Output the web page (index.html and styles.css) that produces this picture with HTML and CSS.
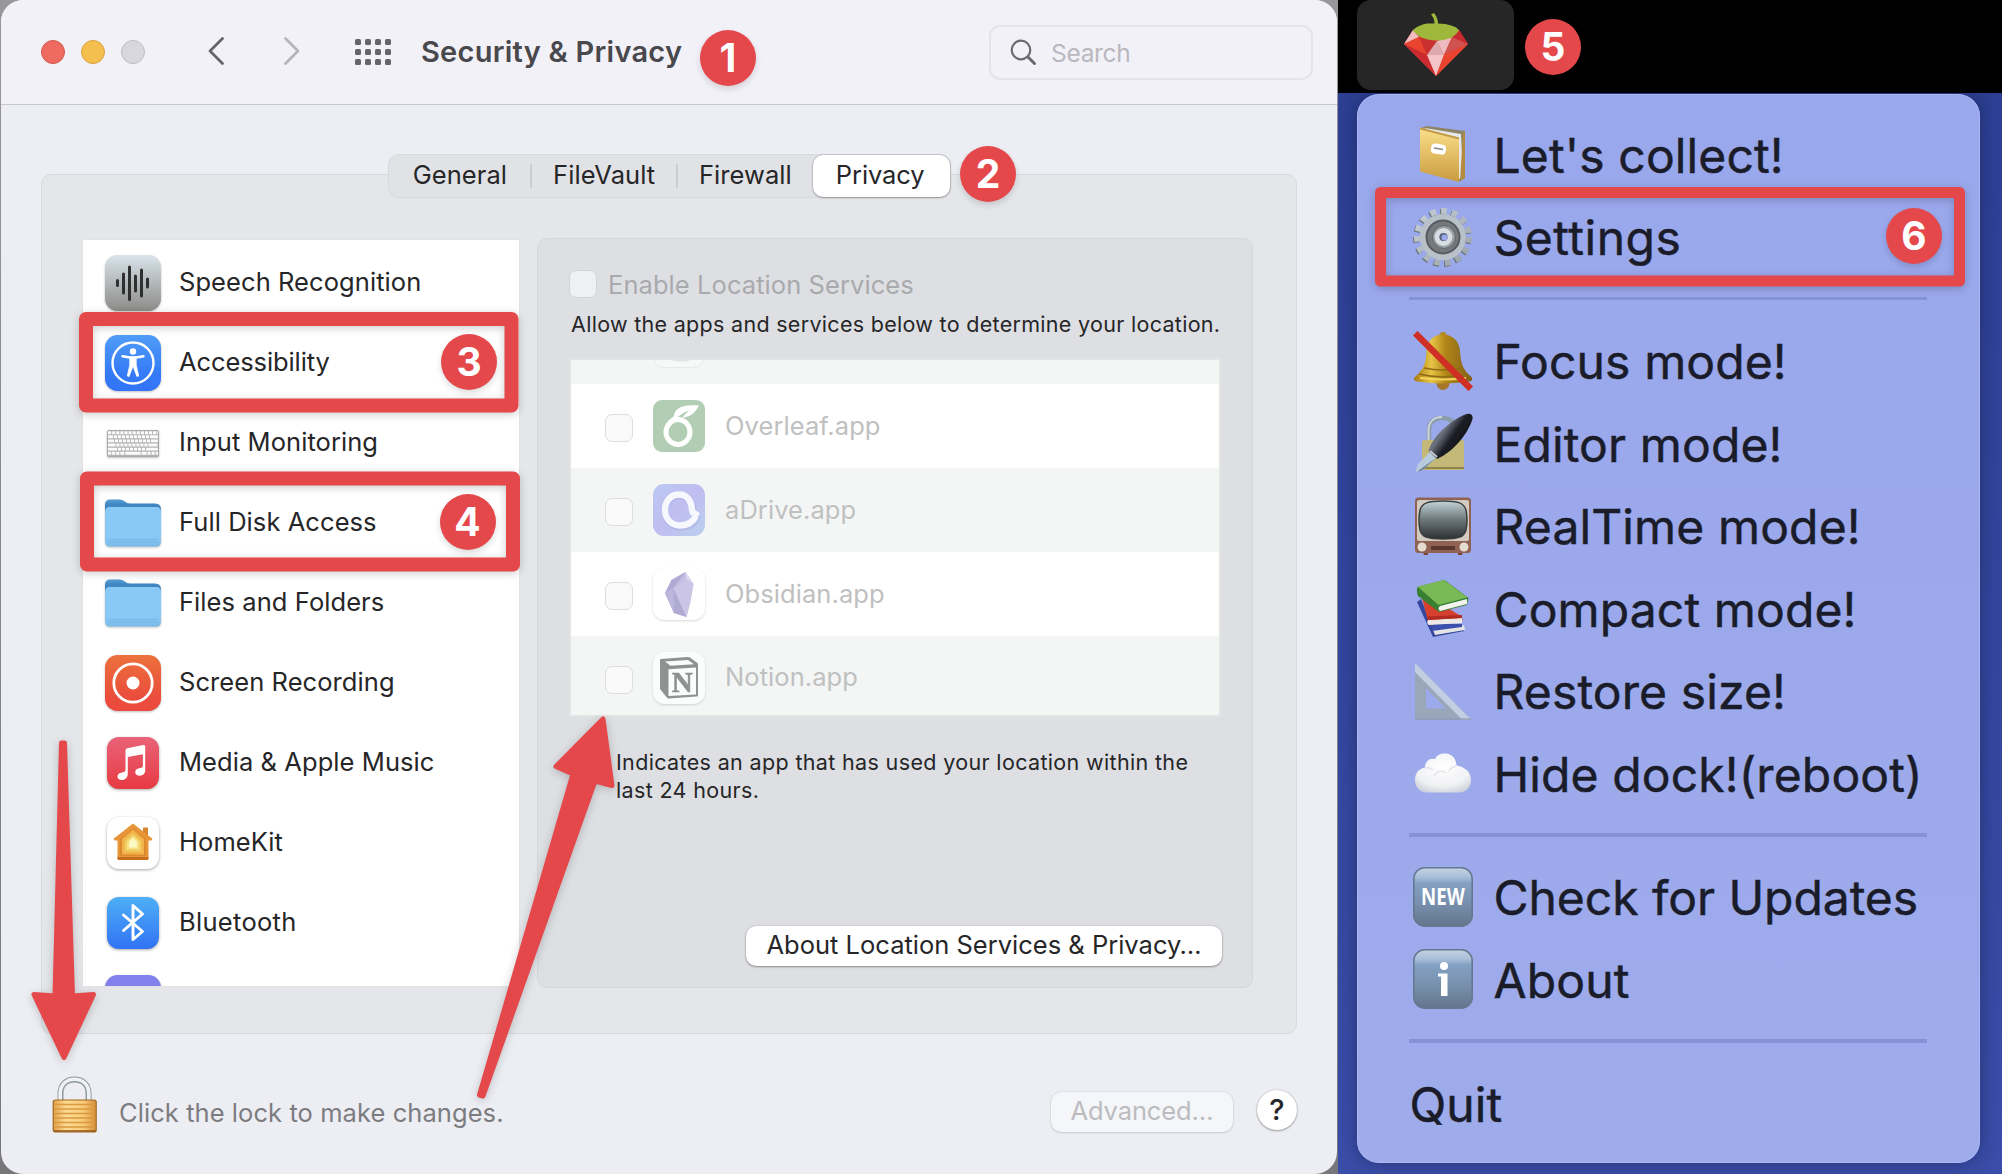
FILE: index.html
```html
<!DOCTYPE html>
<html lang="en">
<head>
<meta charset="utf-8">
<title>Security &amp; Privacy</title>
<link rel="stylesheet" href="styles.css">
</head>
<body>
<svg class="defs" width="0" height="0" aria-hidden="true">
  <defs>
    <linearGradient id="gSpeech" x1="0" y1="0" x2="0" y2="1"><stop offset="0" stop-color="#d9e4ea"/><stop offset="1" stop-color="#8d8b89"/></linearGradient>
    <linearGradient id="gAccess" x1="0" y1="0" x2="0" y2="1"><stop offset="0" stop-color="#4f9df8"/><stop offset=".7" stop-color="#347af6"/><stop offset="1" stop-color="#3274f5"/></linearGradient>
    <linearGradient id="gRec" x1="0" y1="0" x2="0" y2="1"><stop offset="0" stop-color="#ec713c"/><stop offset=".8" stop-color="#ea4b3c"/></linearGradient>
    <linearGradient id="gMusic" x1="0" y1="0" x2="0" y2="1"><stop offset="0" stop-color="#ea6379"/><stop offset="1" stop-color="#e73a42"/></linearGradient>
    <linearGradient id="gBlue" x1="0" y1="0" x2="0" y2="1"><stop offset="0" stop-color="#4eaff6"/><stop offset="1" stop-color="#3173f4"/></linearGradient>
    <linearGradient id="gFolder" x1="0" y1="0" x2="0" y2="1"><stop offset="0" stop-color="#8ac9f6"/><stop offset=".75" stop-color="#89c8f5"/><stop offset="1" stop-color="#79bae8"/></linearGradient>
    <linearGradient id="gFolderBack" x1="0" y1="0" x2="0" y2="1"><stop offset="0" stop-color="#5a9fd6"/><stop offset=".25" stop-color="#3f86c2"/></linearGradient>
    <linearGradient id="gBtn" x1="0" y1="0" x2="0" y2="1"><stop offset="0" stop-color="#c4d2e4"/><stop offset=".16" stop-color="#a9bfd8"/><stop offset=".26" stop-color="#83a1c3"/><stop offset=".6" stop-color="#7890ae"/><stop offset="1" stop-color="#62758c"/></linearGradient>
    <linearGradient id="gGold" x1="0" y1="0" x2="1" y2="0"><stop offset="0" stop-color="#a8790f"/><stop offset=".3" stop-color="#e6c445"/><stop offset=".55" stop-color="#b08416"/><stop offset="1" stop-color="#80601a"/></linearGradient>
    <linearGradient id="gBook" x1="0" y1="0" x2="0" y2="1"><stop offset="0" stop-color="#fbe08c"/><stop offset="1" stop-color="#c99b3e"/></linearGradient>
    <linearGradient id="gPad" x1="0" y1="0" x2="1" y2="0"><stop offset="0" stop-color="#dfa048"/><stop offset=".3" stop-color="#fddb94"/><stop offset=".7" stop-color="#f9cb78"/><stop offset="1" stop-color="#d38d3a"/></linearGradient>
    <linearGradient id="gTv" x1="0" y1="0" x2="0" y2="1"><stop offset="0" stop-color="#c3d4d8"/><stop offset=".5" stop-color="#6c7678"/><stop offset="1" stop-color="#2c3030"/></linearGradient>
    <linearGradient id="gPen" x1="0" y1="0" x2="1" y2=".7"><stop offset="0" stop-color="#14161b"/><stop offset=".4" stop-color="#6d7480"/><stop offset=".6" stop-color="#1c1e25"/><stop offset="1" stop-color="#0b0c10"/></linearGradient>
    <linearGradient id="gDrive" x1="0" y1="0" x2="1" y2="1"><stop offset="0" stop-color="#bac9f2"/><stop offset=".5" stop-color="#c0bdf0"/><stop offset="1" stop-color="#b9d1ee"/></linearGradient>
    <radialGradient id="gCloud" cx=".5" cy=".35" r=".7"><stop offset="0" stop-color="#ffffff"/><stop offset=".7" stop-color="#f0f1f3"/><stop offset="1" stop-color="#cfd3dc"/></radialGradient>
    <linearGradient id="gGear" x1="0" y1="0" x2="1" y2="1"><stop offset="0" stop-color="#c6ced6"/><stop offset="1" stop-color="#9aa2aa"/></linearGradient>
    <symbol id="folder" viewBox="0 0 56 56">
      <path d="M0 10q0-5.500 5-5.500h9c6 0 6 4 11 4h25q6 0 6 6v10H0z" fill="url(#gFolderBack)"/>
      <path d="M0 17q0-5 5-5h46q5 0 5 5v29q0 5.500-5 5.500H5q-5 0-5-5.500z" fill="url(#gFolder)"/>
      <path d="M4 44.500h48M4 47h48" stroke="#75b5e3" stroke-width=".8"/>
    </symbol>
  </defs>
</svg>
<div class="screen">
  <div class="backdrop">
    <main class="window">
      <header class="titlebar">
        <div class="lights"><i class="light red"></i><i class="light yellow"></i><i class="light gray"></i></div>
        <svg class="back" width="18" height="30" viewBox="0 0 18 30"><path d="M15.500 2.500 3 15l12.500 12.500" fill="none" stroke="#656469" stroke-width="2.800" stroke-linecap="round" stroke-linejoin="round"/></svg>
        <svg class="forward" width="18" height="30" viewBox="0 0 18 30"><path d="M2.500 2.500 15 15 2.500 27.500" fill="none" stroke="#b5b4ba" stroke-width="2.800" stroke-linecap="round" stroke-linejoin="round"/></svg>
        <svg class="grid" width="36" height="26" viewBox="0 0 36 26" fill="#656469">
          <rect x="0" y="0" width="6" height="6" rx="1.500"/><rect x="10" y="0" width="6" height="6" rx="1.500"/><rect x="20" y="0" width="6" height="6" rx="1.500"/><rect x="30" y="0" width="6" height="6" rx="1.500"/>
          <rect x="0" y="10" width="6" height="6" rx="1.500"/><rect x="10" y="10" width="6" height="6" rx="1.500"/><rect x="20" y="10" width="6" height="6" rx="1.500"/><rect x="30" y="10" width="6" height="6" rx="1.500"/>
          <rect x="0" y="20" width="6" height="6" rx="1.500"/><rect x="10" y="20" width="6" height="6" rx="1.500"/><rect x="20" y="20" width="6" height="6" rx="1.500"/><rect x="30" y="20" width="6" height="6" rx="1.500"/>
        </svg>
        <h1 class="title">Security &amp; Privacy</h1>
        <div class="search">
          <svg width="27" height="27" viewBox="0 0 27 27" fill="none" stroke="#6b6a6f" stroke-linecap="round"><circle cx="11" cy="11" r="9.300" stroke-width="2.200"/><path d="m18 18 6.500 6.500" stroke-width="3"/></svg>
          <span>Search</span>
        </div>
      </header>
      <nav class="tabs">
        <span class="tab general">General</span><i class="divider"></i><span class="tab vault">FileVault</span><i class="divider"></i><span class="tab fire">Firewall</span><span class="tab active">Privacy</span>
      </nav>
      <section class="panel">
        <ul class="categories">
          <li><svg class="cat-icon" viewBox="0 0 56 56"><rect width="56" height="56" rx="12.500" fill="url(#gSpeech)"/><path d="M12.500 25.500v5M18.500 19v19M24.500 12v32.500M30.500 21v15M36.500 15v26M42.500 24v8" stroke="#2f2f30" stroke-width="3" stroke-linecap="round"/></svg><span>Speech Recognition</span></li>
          <li><svg class="cat-icon" viewBox="0 0 56 56"><rect width="56" height="56" rx="12.500" fill="url(#gAccess)"/><circle cx="28" cy="28" r="20.500" fill="none" stroke="#fff" stroke-width="2.400"/><circle cx="28" cy="16.500" r="3.200" fill="#fff"/><path d="M17.500 21.200 25 22.500h6l7.500-1.300" fill="none" stroke="#fff" stroke-width="2.400" stroke-linecap="round" stroke-linejoin="round"/><path d="M24.800 22h6.400v8l2.500 11-1.800.5L28 31l-3.900 10.500-1.800-.5 2.500-11z" fill="#fff" stroke="#fff" stroke-width=".8" stroke-linejoin="round"/></svg><span class="tight">Accessibility</span></li>
          <li><svg class="cat-icon" viewBox="0 0 56 56"><rect x="2.500" y="15.500" width="51" height="26" rx="1" fill="#b3b3b5" stroke="#a9a9ab"/>
            <g stroke="#fbfbfb" stroke-width="2.900" fill="none"><path d="M3 17.700h50" stroke-dasharray="3.200 .9"/><path d="M3 21.800h50" stroke-dasharray="5 .9 3.100 .9 3.100 .9 3.100 .9 3.100 .9 3.100 .9 3.100 .9 3.100 .9 3.100 .9 3.100 .9 9"/><path d="M3 25.900h50" stroke-dasharray="6 .9 3.100 .9 3.100 .9 3.100 .9 3.100 .9 3.100 .9 3.100 .9 3.100 .9 3.100 .9 3.100 .9 9"/><path d="M3 30h50" stroke-dasharray="7.500 .9 3.100 .9 3.100 .9 3.100 .9 3.100 .9 3.100 .9 3.100 .9 3.100 .9 3.100 .9 9"/><path d="M3 34.100h50" stroke-dasharray="9 .9 3.100 .9 3.100 .9 3.100 .9 3.100 .9 3.100 .9 3.100 .9 3.100 .9 12"/><path d="M3 38.300h50" stroke-dasharray="3.200 .9 3.200 .9 3.200 .9 4 .9 15.500 .9 5 .9 3.200 .9 3.200 .9 3.200"/></g></svg><span>Input Monitoring</span></li>
          <li><svg class="cat-icon" viewBox="0 0 56 56"><use href="#folder"/></svg><span>Full Disk Access</span></li>
          <li><svg class="cat-icon" viewBox="0 0 56 56"><use href="#folder"/></svg><span>Files and Folders</span></li>
          <li><svg class="cat-icon" viewBox="0 0 56 56"><rect width="56" height="56" rx="12.500" fill="url(#gRec)"/><circle cx="28" cy="28" r="19.200" fill="none" stroke="#fff" stroke-width="2.800"/><circle cx="28" cy="28" r="6.500" fill="#fff"/></svg><span>Screen Recording</span></li>
          <li><svg class="cat-icon lifted" viewBox="0 0 56 56"><rect x="2" y="2" width="52" height="52" rx="12" fill="url(#gMusic)"/><path d="M20.500 15.500q0-1.800 1.800-2.200l16-3.200q1.900-.3 1.900 1.500v24c0 3-2.300 5.200-5.400 5.200-2.700 0-4.600-1.400-4.600-3.600 0-2.600 2-3.600 5-4.200 2.200-.4 2.700-1 2.700-2.600V19.300L22.800 22v16.500c0 4-2.600 6.500-6 6.500-2.600 0-4.300-1.500-4.300-3.500 0-2.400 1.800-3.500 4.500-4 2.600-.5 3.500-1 3.500-3z" fill="#fff"/></svg><span>Media &amp; Apple Music</span></li>
          <li><svg class="cat-icon lifted" viewBox="0 0 56 56"><rect x="2" y="2" width="52" height="52" rx="12" fill="#fff"/><path d="M38 20v-7.500h5v12" fill="#d88530"/><path d="m28 8.500 19.500 15.300-1 1.700H43.500V43q0 2-2 2h-27q-2 0-2-2V25.500H9.500l-1-1.700z" fill="#e8953a"/><path d="M12.500 42h31v1.500q0 1.500-2 1.500h-27q-2 0-2-1.500z" fill="#c46f1f"/><path d="m28 13.500 13 10.500v17H15V24z" fill="#dc8a2d"/><path d="m28 14.500 11 9.500v15.500H17V24z" fill="#f3b24b"/><path d="m28 18 8.500 7.500V37h-17V25.500z" fill="#f0c85a"/><path d="m28 20.500 6.500 6V34.500h-13v-8z" fill="#f8e083"/><path d="m28 23 4 4v5.500h-8V27z" fill="#fdfbc4"/></svg><span>HomeKit</span></li>
          <li><svg class="cat-icon lifted" viewBox="0 0 56 56"><rect x="2" y="2" width="52" height="52" rx="12" fill="url(#gBlue)"/><path d="m18.500 20 19 16.500L28 44.500v-34l9.500 8.500-19 16.500" fill="none" stroke="#fff" stroke-width="2.900" stroke-linecap="round" stroke-linejoin="round"/></svg><span class="loose">Bluetooth</span></li>
          <li><svg class="cat-icon" viewBox="0 0 56 56"><rect width="56" height="56" rx="12.500" fill="#8280ea"/></svg></li>
        </ul>
        <div class="detail">
          <label class="enable"><i class="box"></i><span>Enable Location Services</span></label>
          <p class="allow">Allow the apps and services below to determine your location.</p>
          <ul class="apps">
            <li class="stub"><svg width="52" height="9" viewBox="0 0 52 9"><path d="M1.500 0q2 7.500 11 7.500h27q9 0 11-7.500" fill="#f7f9f8" stroke="#e8eae9"/><path d="M19 0h18q-2 1.500-9 1.500t-9-1.500z" fill="#dfe6e2"/></svg></li>
            <li><i class="box"></i><svg class="app-icon" viewBox="0 0 52 52"><rect width="52" height="52" rx="9" fill="#b1ceb4"/><ellipse cx="25" cy="32" rx="12" ry="12.500" fill="none" stroke="#fff" stroke-width="5"/><path d="M12 29c1-8 8-14 18-16-4 3-9 6-12 13z" fill="#fff"/><path d="M21 18C20 8 30 4 46 5.500 43 12 37 17.500 29 17.500L36 10.500Q26 14 21 21z" fill="#fff"/></svg><span>Overleaf.app</span></li>
            <li><i class="box"></i><svg class="app-icon" viewBox="0 0 52 52"><rect width="52" height="52" rx="11" fill="url(#gDrive)"/><path d="M41 30C41.500 17 34 10 26 10S11.500 17 11.500 26 18 41.500 27 41.500c9 0 15-4 17.500-11.500" fill="none" stroke="#8f93d6" stroke-width="6" transform="translate(.5 2)" opacity=".25"/><path d="M39 27C39 17 34 10.500 26 10.500S12 17 12 26s6.500 15.500 15 15.500c7.500 0 13-3.500 16-9.500" fill="none" stroke="#f7f8fd" stroke-width="6.300"/><path d="m35.800 26 5-1.500 6.200 5-3.500 5-6.500-4z" fill="#f7f8fd"/></svg><span>aDrive.app</span></li>
            <li><i class="box"></i><svg class="app-icon lifted" viewBox="0 0 52 52"><rect width="52" height="52" rx="12" fill="#fff"/><path d="m32.500 4-14 8-6.500 13 9 20 12.500 4L37 36l3.500-20z" fill="#c5bfe3"/><path d="m32.500 4-14 8-6.500 13 9 20 12.500 4-13-29z" fill="#b0abd3"/><path d="m12 25 8.500-5L21 45z" fill="#bcb7dc"/><path d="m32.500 4 1 7 7 5z" fill="#dedaf2"/><path d="m20.500 20 13-9 7 5L33.500 49z" fill="#cbc5e8"/></svg><span>Obsidian.app</span></li>
            <li class="last"><i class="box"></i><svg class="app-icon lifted" viewBox="0 0 52 52"><rect width="52" height="52" rx="12" fill="#fbfcfc"/><path d="M7 8q0-1 1-1l26-2 3 .5 8 6V43q0 1.500-1.500 1.500L16 46.500q-1.500 0-2.200-1L7 37z" fill="#8f9290"/><path d="m12 9.500 23-1.600 6 4.300-23.500 1.500z" fill="#fbfcfc"/><path d="M15.500 17.300 43 15.500v27L15.500 44z" fill="#fbfcfc"/><text x="29.200" y="39.500" text-anchor="middle" font-family="Liberation Serif, serif" font-weight="700" font-size="29" fill="#8f9290" stroke="#8f9290" stroke-width=".6">N</text></svg><span>Notion.app</span></li>
          </ul>
          <p class="note">Indicates an app that has used your location within the<br>last 24 hours.</p>
          <button class="button about">About Location Services &amp; Privacy…</button>
        </div>
      </section>
      <footer class="footer">
        <svg class="lock" width="46" height="58" viewBox="0 0 46 58"><path d="M8.500 26V17.500C8.500 8.500 14.500 3.500 22.500 3.500s14 5 14 14V26" fill="none" stroke="#8f98a1" stroke-width="6"/><path d="M8.200 26V17.500C8.200 8.500 14.500 3.200 22.500 3.200s14.300 5.300 14.300 14.300V26" fill="none" stroke="#eef2f5" stroke-width="3.600"/><rect x="1.200" y="24" width="43" height="32" rx="2" fill="url(#gPad)" stroke="#a3661f" stroke-width="1.200"/><path d="M2 28.500h41.500M2 33h41.500M2 37.500h41.500M2 42h41.500M2 46.500h41.500M2 51h41.500" stroke="#d9993f" stroke-width="1.400"/><path d="M2 55h41.500" stroke="#93561a" stroke-width="1.500"/></svg>
        <span class="hint">Click the lock to make changes.</span>
        <button class="button advanced">Advanced…</button>
        <button class="help">?</button>
      </footer>
    </main>
  </div>
  <aside class="desktop">
    <div class="menubar">
      <div class="status-item">
        <svg width="66" height="64" viewBox="0 0 66 64"><path d="M10 17 1 31l32 32 32-32-9-14-23-6z" fill="#d63a33"/><path d="m10 17-9 14 15-7z" fill="#f2bcbc"/><path d="m1 31 15-7 8 18z" fill="#e8442f"/><path d="m1 31 23 11 9 21z" fill="#c92b30"/><path d="m16 24 18 4-10 14z" fill="#c9302f"/><path d="m34 28-10 14h17z" fill="#dda9ae"/><path d="m34 28 7 14 8-18z" fill="#eebcc0"/><path d="M24 42h17L33 63z" fill="#f3c3c5"/><path d="m49 24-8 18 24-11z" fill="#cf5150"/><path d="m41 42 24-11-32 32z" fill="#e8442f"/><path d="m56 17-7 7 16 7z" fill="#c62b30"/><path d="M10 17q5-5 14-6.500h7.500q0-5-3.500-9l3-1.500q4 5 4 10.500 16 .5 21 6.500-5 10-22 10.500Q16 27 10 17z" fill="#9fb83c"/></svg>
      </div>
    </div>
    <div class="wallpaper">
      <ul class="menu">
        <li><svg class="emoji" viewBox="0 0 60 60"><path d="M8 4 14 2 52 7v47l-6 3.500z" fill="#8e8468"/><path d="m12 4 36 6 2 43-4 2z" fill="#e5e7ea"/><path d="m50 9 2-1.500V54l-5 3z" fill="#b28b3f"/><path d="M7 3.500 46 13.500V58L7 47.500z" fill="url(#gBook)"/><path d="M7 3.500 46 13.500v2L7 5.500z" fill="#c09a48"/><rect x="18" y="20" width="15" height="10" rx="4" fill="#fff" transform="rotate(9 25 25)"/><path d="m21 24 9 1.500" stroke="#888" stroke-width="1.500"/></svg><span>Let's collect!</span></li>
        <li><svg class="emoji" viewBox="0 0 60 60"><circle cx="30" cy="30" r="26" fill="none" stroke="#6d747b" stroke-width="6" stroke-dasharray="5.800 5.087" transform="translate(-1 1)"/><circle cx="30" cy="30" r="26" fill="none" stroke="url(#gGear)" stroke-width="6" stroke-dasharray="5.800 5.087"/><circle cx="30" cy="30" r="20" fill="#83898e" stroke="#b9c1c8" stroke-width="6"/><circle cx="30" cy="30" r="16.500" fill="#74797d" stroke="#565b5f" stroke-width="2"/><circle cx="31" cy="30" r="11.500" fill="#969da2" stroke="#5f6569"/><circle cx="30.500" cy="30" r="6.500" fill="#8494d8" stroke="#d5dce2" stroke-width="5"/><circle cx="30.500" cy="30" r="4" fill="#5c6376"/><circle cx="31.500" cy="30.500" r="3" fill="#9aa8ec"/></svg><span class="loose">Settings</span></li>
        <li class="separator"></li>
        <li><svg class="emoji" viewBox="0 0 60 60"><circle cx="30" cy="4.500" r="3.500" fill="#b08a25"/><circle cx="30" cy="52.500" r="6.500" fill="#a8762a"/><path d="M30 3.500c9 0 16 6 17 16 .5 13 3.500 20 11 26 2.500 2.500 1 4.500-2 5q-26 4-52 0c-3.500-.5-4-3-1.500-5C10 39 13 33 13.500 20 14 9.500 21 3.500 30 3.500z" fill="url(#gGold)"/><path d="M6 43q24 6 48 0M11 37q19 4 38 0" fill="none" stroke="#8f6a14" stroke-width="1.400"/><path d="M7 47q23 3 46 0" fill="none" stroke="#f1d35b" stroke-width="1.800"/><path d="m4.500 4.500 51 51" stroke="#cf2f24" stroke-width="6.500" stroke-linecap="square"/></svg><span>Focus mode!</span></li>
        <li><svg class="emoji" viewBox="0 0 60 60"><path d="M16 29V18C16 9 21 5 29 5s13 4 13 13" fill="none" stroke="#8b9da9" stroke-width="4.500"/><path d="M15.500 29V18C15.500 8.500 21 4 29 4" fill="none" stroke="#cbd6df" stroke-width="2"/><rect x="9" y="27" width="42" height="30" rx="2" fill="#c3b877"/><path d="M9 55h42" stroke="#8e854c" stroke-width="2"/><path d="m17 39 6 6L9 57.500l-6.500 1.500L5 51z" fill="#b6cbdc"/><path d="M23 45 9 57.500l-5 1z" fill="#6d8497"/><path d="M15.500 38C20 23 37 8 52 1.500c6-2 9 1 7 6C54 22 40 39 24 46z" fill="url(#gPen)"/><path d="m17 38 7 6" stroke="#c7ced3" stroke-width="1.800"/></svg><span>Editor mode!</span></li>
        <li><svg class="emoji" viewBox="0 0 60 60"><path d="M9 54h6v5h-4zM45 54h6l-2 5h-4z" fill="#764739"/><rect x="2" y="1.500" width="56" height="55.500" rx="3.500" fill="#8f6253"/><rect x="4" y="4" width="52" height="41" rx="2" fill="#d3cac0"/><path d="M30 5c15 0 21 2 23 9q2 10.500 0 20C51 41 46 43 30 43S9 41 7 34q-2-9.500 0-20C9 7 15 5 30 5z" fill="url(#gTv)" stroke="#3a3e3f" stroke-width="1.500"/><path d="M18 50h24v4H18z" fill="#5b382e"/><circle cx="9" cy="51" r="4.500" fill="#e3dccf"/><circle cx="51" cy="51" r="4.500" fill="#e3dccf"/></svg><span>RealTime mode!</span></li>
        <li><svg class="emoji" viewBox="0 0 60 60"><path d="m4 24 4-3 12 30 31-4v6l-31 6z" fill="#35479c"/><path d="m20 52 31-5 1 5-30 5z" fill="#e4e4e4"/><path d="M18 46h31v3l-30 4z" fill="#3d51ac"/><path d="m9 20 6-2 33 20 2 4-34 5z" fill="#d5402f"/><path d="m15 42 34-2v5l-33 2q-3-2-1-5z" fill="#ece9e6"/><path d="m14 38.500 35-1.500v3l-34 2z" fill="#b12b22"/><path d="m4.500 9 27-7 24 18-1.500 7-28 7L5 18q-2-5-.5-9z" fill="#387f31"/><path d="M4.500 8.500 31 2l23.500 17.500-29 7.500z" fill="#79b956"/><path d="m27 28 27-7v5l-27 7q-3-2.500 0-5z" fill="#f3f3f0"/></svg><span>Compact mode!</span></li>
        <li><svg class="emoji" viewBox="0 0 60 60"><path fill-rule="evenodd" d="M2 2 58 58.500H2zM13 27v20.500h20z" fill="#9aa7bb"/><path d="m2 2 56 56.500h-9L2 11z" fill="#c2cfe2"/><path d="M2 58h56" stroke="#8793a8" stroke-width="1"/></svg><span>Restore size!</span></li>
        <li><svg class="emoji" viewBox="0 0 60 60"><path d="M14 49.500C7 49.500 2 44 2 37c0-7 4-11.500 10-12.500C12 18 17 14.500 22 16c2-5 7-6 11-5.500 6 .5 10 5 10.500 12C52 24 58 29 58 37c0 7-5 12.500-12 12.500z" fill="url(#gCloud)"/><path d="M21 33c2-5 8-6 12-3M12 25q5-1 8 2M43 23q-5 1-7 5" fill="none" stroke="#e2e4e9" stroke-width="1.600"/></svg><span>Hide dock!(reboot)</span></li>
        <li class="separator"></li>
        <li><svg class="emoji" viewBox="0 0 60 60"><rect x=".8" y=".8" width="58.400" height="58.400" rx="11" fill="url(#gBtn)" stroke="#64798f" stroke-width="1.600"/><text x="30" y="38" text-anchor="middle" textLength="44" lengthAdjust="spacingAndGlyphs" font-family="Open Sans, sans-serif" font-weight="700" font-size="23" fill="#fff">NEW</text></svg><span class="tight">Check for Updates</span></li>
        <li><svg class="emoji" viewBox="0 0 60 60"><rect x=".8" y=".8" width="58.400" height="58.400" rx="11" fill="url(#gBtn)" stroke="#64798f" stroke-width="1.600"/><circle cx="31" cy="17" r="4" fill="#fff"/><path d="M25 24.500h9.500V47H28V27.500h-3z" fill="#fff"/></svg><span>About</span></li>
        <li class="separator"></li>
        <li class="quit"><span>Quit</span></li>
      </ul>
    </div>
  </aside>
  <svg class="marks" width="2002" height="1174" viewBox="0 0 2002 1174">
    <g fill="none" stroke="#e4484b" stroke-linejoin="round">
      <path d="M86 319H511.500V405.500H86z" stroke-width="14"/>
      <path d="M87 478.500H513V564.500H87z" stroke-width="14"/>
      <path d="M1380.500 192.500H1959.500V281H1380.500z" stroke-width="11"/>
    </g>
    <g fill="#e4484b" stroke="#e4484b" stroke-width="5" stroke-linejoin="round">
      <path d="M61.500 743h3L72.500 996 93.500 994.500 64 1057.500 34 994.500 55 996z"/>
      <path d="M479.500 1095 573 774 556 766.500 603 719 612 785.500 595 781 483 1096z"/>
    </g>
  </svg>
  <b class="badge b1">1</b><b class="badge b2">2</b><b class="badge b3">3</b><b class="badge b4">4</b><b class="badge b5">5</b><b class="badge b6">6</b>
</div>
</body>
</html>
```
FILE: styles.css
```css
* { box-sizing: border-box; }
body { margin: 0; font-family: Inter, "Liberation Sans", sans-serif; font-size: 25.5px; letter-spacing: .07px; color: #262628; }
ul, p, h1 { margin: 0; padding: 0; list-style: none; }
svg { display: block; flex: none; }
button { font: inherit; letter-spacing: inherit; color: inherit; border: 0; padding: 0; }
.defs { position: absolute; }
.screen { position: relative; display: flex; width: 2002px; height: 1174px; overflow: hidden; }

/* preferences window */
.backdrop { width: 1338px; padding: 0 1px; background: linear-gradient(#98989a, #77777a); }
.window { display: flex; flex-direction: column; height: 1174px; background: #edeef3; border-radius: 22px; overflow: hidden; }
.titlebar { display: flex; align-items: center; height: 105px; padding: 0 24px 0 40px; background: #f3f1f8; border-bottom: 1px solid #c9c8cd; }
.lights { display: flex; gap: 16px; }
.light { width: 24px; height: 24px; border-radius: 50%; border: 1px solid; }
.red { background: #ed6b60; border-color: #d5564c; }
.yellow { background: #f5bf4f; border-color: #d8a243; }
.gray { background: #d8d7dd; border-color: #bebdc3; }
.back { margin: -2px 0 0 62px; }
.forward { margin: -2px 0 0 58px; }
.grid { margin: -1px 0 0 54px; }
.title { margin-left: 30px; font-size: 29px; font-weight: 600; line-height: 40px; letter-spacing: .25px; color: #49484c; }
.search { display: flex; align-items: center; gap: 14px; width: 324px; height: 55px; margin-left: auto; padding-left: 19px; border: 2px solid #e5e3ea; border-radius: 11px; font-size: 24.5px; letter-spacing: -.3px; color: #b9b8be; }
.search span { padding-top: 2px; }

.tabs { position: relative; z-index: 1; display: flex; align-items: center; align-self: center; width: 563px; height: 44px; margin: 49px 0 -24px; border: 1px solid #d8d9dc; border-radius: 11px; background: #e1e2e6; line-height: 40px; }
.tab { text-align: center; padding-bottom: 2px; }
.general { width: 142px; padding-left: 1px; }
.divider { width: 2px; height: 24px; background: #cccdd1; }
.vault { width: 144px; }
.fire { width: 135px; }
.active { width: 137px; height: 42px; padding-right: 2px; border-radius: 10px; background: #fff; box-shadow: 0 0 2px rgba(0,0,0,.3), 0 1px 2px rgba(0,0,0,.25); letter-spacing: -.1px; }

.panel { display: flex; align-items: flex-start; gap: 18px; height: 860px; margin: 0 40px; padding: 65px 0 0 41px; border: 1px solid #d9dade; border-radius: 10px; background: #e5e6ea; }
.categories { width: 436px; height: 746px; padding-top: 3px; overflow: hidden; background: #fff; box-shadow: 0 0 0 1px #e2e2e3; }
.categories li { display: flex; align-items: center; gap: 18px; height: 80px; padding-left: 22px; }
.categories span { padding-bottom: 4px; }
.tight { letter-spacing: -.1px; }
.categories .loose { letter-spacing: .3px; }
.cat-icon { width: 56px; height: 56px; filter: drop-shadow(0 1px 1px rgba(0,0,0,.25)); }
.lifted { filter: drop-shadow(0 1px 1.500px rgba(0,0,0,.35)); }

.detail { display: flex; flex-direction: column; width: 716px; height: 750px; margin-top: -2px; padding: 31px 30px 0 31px; border: 1px solid #d6d7da; border-radius: 10px; background: #dedfe3; }
.enable { display: flex; align-items: center; gap: 11px; height: 28px; color: #a9aaad; }
.box { flex: none; width: 28px; height: 28px; border: 1.500px solid #dcdddd; border-radius: 7px; background: #fafafa; }
.enable .box { background: #eff0f1; border-color: #d2d3d6; }
.allow { margin: 12px 0 0 2px; font-size: 21.5px; line-height: 28px; letter-spacing: .3px; white-space: nowrap; }
.apps { width: 652px; height: 359px; margin: 20px 0 0; border: 2px solid #e3e5e4; background: #fff; overflow: hidden; color: #bfc0c0; }
.apps li { display: flex; align-items: center; gap: 20px; height: 84px; padding-left: 34px; }
.apps li:nth-child(odd) { background: #f4f6f5; }
.apps .stub { height: 24px; padding-left: 82px; align-items: flex-start; }
.apps .last { height: 83px; }
.apps .box { margin-top: 4px; }
.apps span { padding-bottom: 2px; }
.app-icon { width: 52px; height: 52px; }
.app-icon.lifted { filter: drop-shadow(0 1px 1px rgba(0,0,0,.15)); }
.note { margin: 31px 0 0 47px; font-size: 21.5px; line-height: 28px; letter-spacing: .35px; white-space: nowrap; }
.button { height: 40px; border-radius: 10px; background: #fff; line-height: 37px; padding-bottom: 3px; text-align: center; box-shadow: 0 0 2px rgba(0,0,0,.2), 0 1px 2px rgba(0,0,0,.35); }
.about { align-self: flex-end; width: 476px; margin: 122px 0 0; letter-spacing: 0; }

.footer { display: flex; align-items: center; height: 42px; margin-top: 57px; padding: 0 40px 0 51px; }
.lock { margin-top: -14px; }
.hint { margin-left: 21px; color: #7c7c80; }
.advanced { width: 182px; margin-left: auto; background: #f5f6f9; color: #bcbcc0; box-shadow: 0 0 2px rgba(0,0,0,.15), 0 1px 2px rgba(0,0,0,.12); letter-spacing: -.1px; }
.help { width: 40px; height: 40px; margin: -4px 0 0 24px; border-radius: 50%; background: #fff; font-size: 29px; font-weight: 500; line-height: 40px; box-shadow: 0 0 2px rgba(0,0,0,.25), 0 1px 2px rgba(0,0,0,.3); }

/* menu bar app */
.desktop { display: flex; flex-direction: column; width: 664px; }
.menubar { height: 93px; padding-left: 19px; background: #000; }
.status-item { display: flex; justify-content: center; width: 157px; height: 90px; padding-top: 13px; border-radius: 14px; background: #262626; }
.wallpaper { flex: 1; padding: 1px 22px 0 19px; background: linear-gradient(#2c3f93, #3a4da8); overflow: hidden; }
.menu { height: 1069px; padding-top: 19px; border-radius: 22px; background: linear-gradient(#99a7ec, #9eacec); box-shadow: 0 0 0 1px rgba(190,200,250,.45) inset, 0 0 18px rgba(20,25,60,.45); font-size: 48px; letter-spacing: .13px; color: #1a1c29; -webkit-text-stroke: .5px #1a1c29; white-space: nowrap; }
.menu li { display: flex; align-items: center; gap: 20.500px; height: 82.5px; padding-left: 56px; }
.menu span { padding-top: 2px; }
.menu .tight { letter-spacing: -.05px; }
.menu .loose { letter-spacing: .5px; }
.emoji { width: 60px; height: 60px; -webkit-text-stroke: 0; }
.menu .separator { height: 41.250px; padding: 0 53px 0 52px; }
.separator::before { content: ""; width: 100%; height: 3.500px; background: #8593d6; }
.menu .quit { padding-left: 52.500px; }

/* annotations */
.marks { position: absolute; left: 0; top: 0; filter: drop-shadow(0 2px 4px rgba(0,0,0,.2)); }
.badge { position: absolute; width: 56px; height: 56px; border-radius: 50%; background: #e4484b; color: #fff; font-size: 39px; font-weight: 700; line-height: 56px; text-align: center; box-shadow: 0 3px 6px rgba(0,0,0,.14); }
.b1 { left: 700px; top: 30px; }
.b2 { left: 960px; top: 146px; }
.b3 { left: 441px; top: 334px; }
.b4 { left: 439.500px; top: 493.500px; }
.b5 { left: 1525px; top: 19px; }
.b6 { left: 1886px; top: 208px; }
```
